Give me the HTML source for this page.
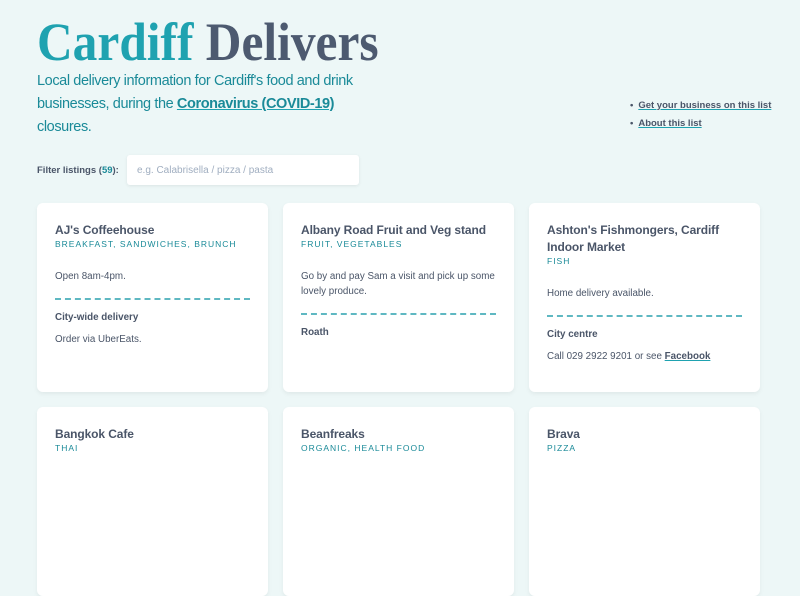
<!DOCTYPE html>
<html><head><meta charset="utf-8"><style>
*{box-sizing:border-box;margin:0;padding:0}
body{width:800px;height:451px;overflow:hidden;background:#edf7f7;font-family:"Liberation Sans",sans-serif;color:#4a5568;position:relative}
h1{position:absolute;left:37px;top:10px;font-family:"Liberation Serif",serif;font-weight:bold;font-size:54px;line-height:64px;color:#4d5a70;transform:scaleX(.915);transform-origin:left;white-space:nowrap}
h1 span{color:#1fa2b0}
.intro{position:absolute;left:37px;top:70px;width:400px;font-size:14.5px;letter-spacing:-0.4px;line-height:23px;color:#1a8a98;white-space:nowrap}
.intro a{color:#1a8a98;font-weight:bold;text-decoration:underline;text-decoration-color:#1fa2b0}
.links{position:absolute;left:630px;top:97px;font-size:9.5px;font-weight:bold;line-height:18px}
.links div::before{content:"•";margin-right:5px}
.links a{color:#4a5568;text-decoration:underline;text-decoration-color:#1fa2b0}
.filt{position:absolute;left:37px;top:165px;font-size:9.5px;font-weight:bold}
.filt b{color:#1a8a98}
.inp{position:absolute;left:127px;top:155px;width:232px;height:30px;background:#fff;border-radius:3px;box-shadow:0 1px 3px rgba(0,0,0,.08);font-size:10px;color:#a0aec0;padding:10px 10px}
.card{position:absolute;width:231px;height:189px;background:#fff;border-radius:6px;box-shadow:0 2px 5px rgba(0,0,0,.06);padding:19px 18px}
.card h2{font-size:12px;font-weight:bold;color:#4a5568;line-height:17px;letter-spacing:-0.1px}
.tag{font-size:8.5px;letter-spacing:1px;color:#1a8a98;margin-top:0}
.card p{font-size:9.8px;color:#4a5568;line-height:15px}
.dash{border-top:2px dashed #5fb8c2;margin:14px 0 12px}
.card h3{font-size:9.8px;font-weight:bold;margin-bottom:9px}
.card a{color:#4a5568;font-weight:bold;text-decoration:underline;text-decoration-color:#1fa2b0}
</style></head><body>
<h1><span>Cardiff</span> Delivers</h1>
<div class="intro">Local delivery information for Cardiff's food and drink<br>businesses, during the <a>Coronavirus (COVID-19)</a><br>closures.</div>
<div class="links"><div><a>Get your business on this list</a></div><div><a>About this list</a></div></div>
<div class="filt">Filter listings (<b>59</b>):</div>
<div class="inp">e.g. Calabrisella / pizza / pasta</div>

<div class="card" style="left:37px;top:203px"><h2>AJ's Coffeehouse</h2><div class="tag">BREAKFAST, SANDWICHES, BRUNCH</div><p style="margin-top:20px">Open 8am-4pm.</p><div class="dash"></div><h3>City-wide delivery</h3><p>Order via UberEats.</p></div>
<div class="card" style="left:283px;top:203px"><h2 style="white-space:nowrap">Albany Road Fruit and Veg stand</h2><div class="tag">FRUIT, VEGETABLES</div><p style="margin-top:20px">Go by and pay Sam a visit and pick up some lovely produce.</p><div class="dash"></div><h3>Roath</h3></div>
<div class="card" style="left:529px;top:203px"><h2>Ashton's Fishmongers, Cardiff Indoor Market</h2><div class="tag">FISH</div><p style="margin-top:20px">Home delivery available.</p><div class="dash"></div><h3>City centre</h3><p>Call 029 2922 9201 or see <a>Facebook</a></p></div>

<div class="card" style="left:37px;top:407px"><h2>Bangkok Cafe</h2><div class="tag">THAI</div></div>
<div class="card" style="left:283px;top:407px"><h2>Beanfreaks</h2><div class="tag">ORGANIC, HEALTH FOOD</div></div>
<div class="card" style="left:529px;top:407px"><h2>Brava</h2><div class="tag">PIZZA</div></div>
</body></html>
